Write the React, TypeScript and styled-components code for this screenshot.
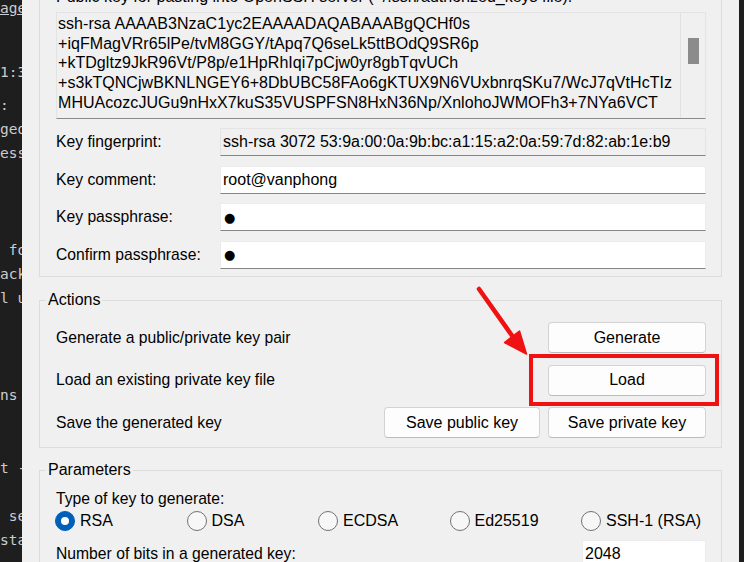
import React from "react";
import styled, { createGlobalStyle } from "styled-components";

const UI_FONT = `"Liberation Sans", Arial, sans-serif`;

const Global = createGlobalStyle`
  html, body { margin: 0; padding: 0; background: #1e1e1e; }
  body { width: 744px; height: 562px; overflow: hidden; }
  * { box-sizing: border-box; }
`;

const Page = styled.div`
  position: relative;
  display: flex;
  width: 744px;
  height: 562px;
  overflow: hidden;
  background: #1e1e1e;
  font-family: ${UI_FONT};
  font-size: 16px;
  color: #000;
`;

const Terminal = styled.div`
  flex: none;
  width: 22px;
  overflow: hidden;
  margin-top: -4px;
  font-family: "DejaVu Sans Mono", "Liberation Mono", monospace;
  font-size: 14.5px;
  color: #cccccc;
`;

const TermLine = styled.div<{ $link?: boolean; $h?: number }>`
  height: ${(p) => p.$h ?? 24.2}px;
  line-height: 24.2px;
  white-space: pre;
  text-decoration: ${(p) => (p.$link ? "underline" : "none")};
`;

const Window = styled.div`
  flex: none;
  width: 717px;
  background: #f0f0f0;
  padding: 0 17px;
  display: flex;
  flex-direction: column;
`;

const Group = styled.section<{ $cut?: boolean; $mt?: number }>`
  position: relative;
  border: 1px solid #dcdcdc;
  border-top-style: ${(p) => (p.$cut ? "none" : "solid")};
  margin-top: ${(p) => p.$mt ?? 0}px;
`;

const Legend = styled.div`
  position: absolute;
  top: -10px;
  left: 6px;
  padding: 0 2px;
  line-height: 18px;
  background: #f0f0f0;
`;

const Label = styled.span`
  font-size: 15.7px;
  white-space: nowrap;
`;

const KeyBody = styled.div`
  padding: 0 15px 7.5px 16px;
  display: flex;
  flex-direction: column;
`;

const Caption = styled.div`
  height: 18px;
  line-height: 18px;
  margin-top: -12px;
  white-space: nowrap;
`;

const KeyBox = styled.div`
  margin-top: 6px;
  height: 107px;
  display: flex;
  background: #f0f0f0;
  border: 1px solid #e3e3e3;
  border-bottom-color: #8a8a8a;
`;

const KeyText = styled.div`
  flex: 1;
  padding: 1px 1px;
  line-height: 19.7px;
  white-space: pre;
  overflow: hidden;
  letter-spacing: 0.05px;
`;

const ScrollTrack = styled.div`
  width: 25px;
  flex: none;
  border-left: 1px solid #e2e2e2;
`;

const ScrollThumb = styled.div`
  margin: 25px 0 0 7px;
  width: 11px;
  height: 26px;
  background: #8b8b8b;
`;

const FieldRows = styled.div`
  margin-top: 9px;
  display: flex;
  flex-direction: column;
  gap: 9.5px;
`;

const FieldRow = styled.div`
  display: grid;
  grid-template-columns: 164px 1fr;
  align-items: center;
  height: 28px;
`;

const Field = styled.div<{ $readOnly?: boolean }>`
  height: 28px;
  display: flex;
  align-items: center;
  padding: 0 2px;
  white-space: nowrap;
  overflow: hidden;
  background: ${(p) => (p.$readOnly ? "#f0f0f0" : "#ffffff")};
  border: 1px solid ${(p) => (p.$readOnly ? "#e4e4e4" : "#ececec")};
  border-bottom-color: #858585;
`;

const Mask = styled.span`
  font-family: "DejaVu Sans", sans-serif;
  font-size: 13px;
  padding-left: 1px;
`;

const ActionsBody = styled.div`
  padding: 21px 15px 9px 16px;
  display: flex;
  flex-direction: column;
  gap: 11.5px;
`;

const ActionRow = styled.div`
  display: grid;
  grid-template-columns: 1fr auto;
  align-items: center;
  height: 31px;
`;

const ButtonGroup = styled.div`
  display: flex;
  gap: 8px;
`;

const Button = styled.button<{ $w?: number }>`
  width: ${(p) => p.$w ?? 158}px;
  height: 31px;
  padding: 0;
  font-family: ${UI_FONT};
  font-size: 16px;
  color: #000;
  background: #fdfdfd;
  border: 1px solid #d3d3d3;
  border-bottom-color: #bcbcbc;
  border-radius: 4px;
`;

const HighlightWrap = styled.div`
  position: relative;
`;

const Highlight = styled.div`
  position: absolute;
  left: -19px;
  right: -13px;
  top: -11px;
  bottom: -10px;
  border: 4px solid #f01212;
  pointer-events: none;
`;

const ParamsBody = styled.div`
  padding: 19px 15px 20px 16px;
  display: flex;
  flex-direction: column;
`;

const TypeLabel = styled.div`
  line-height: 18px;
  font-size: 15.7px;
`;

const RadioRow = styled.div`
  margin: 2px 0 0 -1px;
  height: 21px;
  display: grid;
  grid-template-columns: repeat(5, 131.5px);
  align-items: center;
`;

const RadioItem = styled.label`
  display: flex;
  align-items: center;
  gap: 5px;
  white-space: nowrap;
`;

const RadioDot = styled.span<{ $checked?: boolean }>`
  width: 20px;
  height: 20px;
  flex: none;
  border-radius: 50%;
  display: flex;
  align-items: center;
  justify-content: center;
  background: ${(p) => (p.$checked ? "#005fb8" : "#f7f7f7")};
  border: 1px solid ${(p) => (p.$checked ? "#005fb8" : "#727272")};
  &::after {
    content: "";
    display: ${(p) => (p.$checked ? "block" : "none")};
    width: 8px;
    height: 8px;
    border-radius: 50%;
    background: #fff;
  }
`;

const BitsRow = styled.div`
  margin-top: 9px;
  display: grid;
  grid-template-columns: 1fr 124px;
  align-items: center;
  height: 28px;
`;

const Annotation = styled.svg`
  position: absolute;
  left: 0;
  top: 0;
  pointer-events: none;
`;

const termLines: { t: string; link?: boolean; h?: number }[] = [
  { t: "age", link: true },
  { t: "" },
  { t: "", h: 15.6 },
  { t: "1:3", h: 32.8 },
  { t: ":" },
  { t: "ged" },
  { t: "ess" },
  { t: "" },
  { t: "" },
  { t: "" },
  { t: " fo" },
  { t: "ack" },
  { t: "l u" },
  { t: "" },
  { t: "" },
  { t: "" },
  { t: "ns" },
  { t: "" },
  { t: "" },
  { t: "t -" },
  { t: "" },
  { t: " se" },
  { t: "sta" },
];

const keyLines = [
  "ssh-rsa AAAAB3NzaC1yc2EAAAADAQABAAABgQCHf0s",
  "+iqFMagVRr65lPe/tvM8GGY/tApq7Q6seLk5ttBOdQ9SR6p",
  "+kTDgltz9JkR96Vt/P8p/e1HpRhIqi7pCjw0yr8gbTqvUCh",
  "+s3kTQNCjwBKNLNGEY6+8DbUBC58FAo6gKTUX9N6VUxbnrqSKu7/WcJ7qVtHcTIz",
  "MHUAcozcJUGu9nHxX7kuS35VUSPFSN8HxN36Np/XnlohoJWMOFh3+7NYa6VCT",
];

const keyTypes = [
  { label: "RSA", checked: true },
  { label: "DSA" },
  { label: "ECDSA" },
  { label: "Ed25519" },
  { label: "SSH-1 (RSA)" },
];

export default function App() {
  return (
    <Page>
      <Global />
      <Terminal>
        {termLines.map((l, i) => (
          <TermLine key={i} $link={l.link} $h={l.h}>
            {l.t}
          </TermLine>
        ))}
      </Terminal>
      <Window>
        <Group $cut>
          <KeyBody>
            <Caption>
              Public key for pasting into OpenSSH server (~/.ssh/authorized_keys file):
            </Caption>
            <KeyBox>
              <KeyText>
                {keyLines.map((l) => (
                  <div key={l}>{l}</div>
                ))}
              </KeyText>
              <ScrollTrack>
                <ScrollThumb />
              </ScrollTrack>
            </KeyBox>
            <FieldRows>
              <FieldRow>
                <Label>Key fingerprint:</Label>
                <Field $readOnly>ssh-rsa 3072 53:9a:00:0a:9b:bc:a1:15:a2:0a:59:7d:82:ab:1e:b9</Field>
              </FieldRow>
              <FieldRow>
                <Label>Key comment:</Label>
                <Field>root@vanphong</Field>
              </FieldRow>
              <FieldRow>
                <Label>Key passphrase:</Label>
                <Field>
                  <Mask>●</Mask>
                </Field>
              </FieldRow>
              <FieldRow>
                <Label>Confirm passphrase:</Label>
                <Field>
                  <Mask>●</Mask>
                </Field>
              </FieldRow>
            </FieldRows>
          </KeyBody>
        </Group>

        <Group $mt={23}>
          <Legend>Actions</Legend>
          <ActionsBody>
            <ActionRow>
              <Label>Generate a public/private key pair</Label>
              <Button>Generate</Button>
            </ActionRow>
            <ActionRow>
              <Label>Load an existing private key file</Label>
              <HighlightWrap>
                <Button>Load</Button>
                <Highlight />
              </HighlightWrap>
            </ActionRow>
            <ActionRow>
              <Label>Save the generated key</Label>
              <ButtonGroup>
                <Button $w={156}>Save public key</Button>
                <Button>Save private key</Button>
              </ButtonGroup>
            </ActionRow>
          </ActionsBody>
        </Group>

        <Group $mt={22}>
          <Legend>Parameters</Legend>
          <ParamsBody>
            <TypeLabel>Type of key to generate:</TypeLabel>
            <RadioRow>
              {keyTypes.map((k) => (
                <RadioItem key={k.label}>
                  <RadioDot $checked={k.checked} />
                  {k.label}
                </RadioItem>
              ))}
            </RadioRow>
            <BitsRow>
              <Label>Number of bits in a generated key:</Label>
              <Field>2048</Field>
            </BitsRow>
          </ParamsBody>
        </Group>
      </Window>

      <Annotation width="744" height="562" viewBox="0 0 744 562">
        <line x1="479" y1="289" x2="513" y2="337" stroke="#f01212" strokeWidth="4.5" strokeLinecap="round" />
        <polygon points="526.5,354 504.5,342.5 519.5,331" fill="#f01212" stroke="#f01212" strokeWidth="1.5" strokeLinejoin="round" />
      </Annotation>
    </Page>
  );
}
